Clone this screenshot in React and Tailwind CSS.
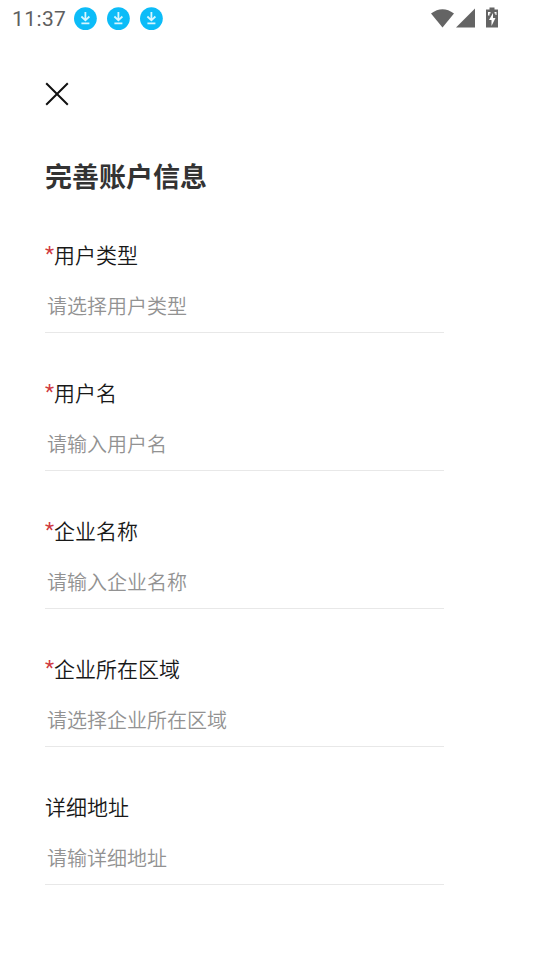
const fields = [
  { label: "用户类型", placeholder: "请选择用户类型", required: true },
  { label: "用户名", placeholder: "请输入用户名", required: true },
  { label: "企业名称", placeholder: "请输入企业名称", required: true },
  { label: "企业所在区域", placeholder: "请选择企业所在区域", required: true },
  { label: "详细地址", placeholder: "请输详细地址", required: false },
];

const DownloadIcon = () => (
  <svg className="h-6 w-6" viewBox="0 0 24 24" fill="none">
    <circle cx="12.4" cy="11.6" r="11.4" fill="#0cbcf8" />
    <path d="M12.400 5v8M8.400 9.500l4 3.800 4-3.800M8.400 16.400h8" stroke="#d8f6ff" strokeWidth="1.8" />
  </svg>
);

const StatusBar = () => (
  <div className="flex h-[37px] items-center justify-between pl-3 pr-[41px]">
    <div className="flex items-center">
      <span className="w-[61px] font-[Roboto] text-[21px] font-[450] leading-6 tracking-[0.4px] text-[#5f5f5f]">11:37</span>
      <div className="flex gap-[9px]">
        <DownloadIcon />
        <DownloadIcon />
        <DownloadIcon />
      </div>
    </div>
    <svg className="h-6 w-[68px]" viewBox="431 5 68 24" fill="#646464">
      <path d="M431 11.500Q442.500 3 454 11.500L442.500 25.500Z" />
      <path d="M475 6.500V25.500H456Z" />
      <path
        fillRule="evenodd"
        d="M489.500 5.500h5v2H498v18h-12v-18h3.500ZM493 11l-4 7h2.500v6l4-8H493ZM488 10h2.500v1.500h-1v2H488ZM494.500 10h2v3h-1v-1.500h-1Z"
      />
    </svg>
  </div>
);

const Field = ({ label, placeholder, required }) => (
  <div className="h-[138px]">
    <label className="flex h-8 items-center text-[21px] font-[350] text-[#181818]">
      {required && <span className="w-[9px] font-[Roboto] font-normal text-[#d03a40]">*</span>}
      {label}
    </label>
    <input
      className="mt-[15px] block h-[47px] w-full border-b border-[#e8e8e8] pl-[2px] pb-[7px] text-[20px] font-[350] outline-none placeholder:text-[#929292]"
      placeholder={placeholder}
    />
  </div>
);

export default function App() {
  return (
    <div className="h-[960px] w-[540px] overflow-hidden bg-white font-['Noto_Sans_CJK_SC',sans-serif]">
      <StatusBar />
      <main className="w-[444px] pl-[45px]">
        <button className="mt-[45px] block" aria-label="关闭">
          <svg className="h-6 w-6" viewBox="0 0 24 24" fill="none" stroke="#111" strokeWidth="2">
            <path d="M1.200 1.200l21.600 21.600M22.800 1.200L1.200 22.800" />
          </svg>
        </button>
        <h1 className="mt-[50px] h-10 text-[27px] font-bold leading-10 text-[#333]">完善账户信息</h1>
        <form className="mt-[43px]">
          {fields.map((field) => (
            <Field key={field.label} {...field} />
          ))}
        </form>
      </main>
    </div>
  );
}
